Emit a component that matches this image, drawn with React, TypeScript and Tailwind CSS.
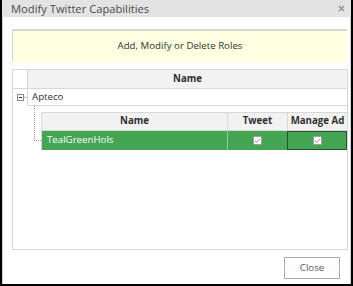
import React from "react";

function Check() {
  return (
    <svg width="9" height="9" viewBox="0 0 9 9">
      <rect x="0.5" y="0.5" width="8" height="8" fill="#ffffff" stroke="#9c9c9c" />
      <path d="M2 4.6L3.7 6.2L7 2.8" fill="none" stroke="#8a8a8a" strokeWidth="1" />
    </svg>
  );
}

export default function App() {
  return (
    <div className="w-[353px] h-[286px] bg-white border-x-2 border-b-2 border-black flex flex-col font-['Open_Sans',sans-serif] overflow-hidden">
      <div className="h-[17px] shrink-0 bg-[#e3e3e3] flex items-center justify-between pl-[9px] pr-[6px]">
        <span className="text-[11.2px] leading-none text-[#4a4a4a]">Modify Twitter Capabilities</span>
        <svg width="7" height="7" viewBox="0 0 7 7">
          <path d="M1 1L6 6M6 1L1 6" stroke="#8a8a8a" strokeWidth="1.1" />
        </svg>
      </div>
      <div className="flex-1 flex flex-col border-x border-[#d2d2d2]">
        <div className="ml-[9px] mt-[12px] w-[335px] h-[33px] bg-[#ffffe1] border-t-2 border-l border-[#d6d6d6] flex items-center justify-center text-[9.7px] text-[#333333]">
          Add, Modify or Delete Roles
        </div>
        <div className="ml-[9px] mt-[7px] w-[336px] h-[181px] border border-[#d8d8d8] flex flex-col text-[9.7px] text-[#333333]">
          <div className="flex h-[19px] border-b border-[#d8d8d8]">
            <div className="w-[14px]" />
            <div className="flex-1 bg-[#f2f2f2] border-l border-[#d8d8d8] flex items-center justify-center font-bold text-[#2f2f2f]">
              Name
            </div>
          </div>
          <div className="flex h-[17px]">
            <div className="w-[14px] flex items-center">
              <div className="ml-[4px] w-[7px] h-[7px] border border-[#8c8c8c] bg-white flex items-center justify-center">
                <div className="w-[3px] h-px bg-[#333333]" />
              </div>
              <div className="w-[3px] border-t border-dotted border-[#9a9a9a]" />
            </div>
            <div className="flex-1 border-l border-b border-[#d8d8d8] pl-[4px] flex items-center">
              Apteco
            </div>
          </div>
          <div className="flex">
            <div className="w-[28px] shrink-0">
              <div className="ml-[21px] w-[7px] h-[35px] border-l border-b border-dotted border-[#9a9a9a]" />
            </div>
            <div className="mt-[6px] flex-1 border-l border-t border-[#d8d8d8] flex flex-col">
              <div className="flex h-[18px] bg-[#f2f2f2] border-b border-[#d8d8d8] font-bold text-[#2f2f2f]">
                <div className="flex-1 flex items-center justify-center">Name</div>
                <div className="w-[60px] border-l border-[#d8d8d8] flex items-center justify-center">Tweet</div>
                <div className="w-[60px] border-l border-[#d8d8d8] flex items-center justify-center">Manage Ad</div>
              </div>
              <div className="flex h-[19px] bg-[#44a553] text-white">
                <div className="flex-1 flex items-center pl-[5px]">TealGreenHols</div>
                <div className="w-[60px] border-l border-[#8fcf98] flex items-center justify-center">
                  <Check />
                </div>
                <div className="w-[60px] border border-[#2a4f31] flex items-center justify-center">
                  <Check />
                </div>
              </div>
            </div>
          </div>
        </div>
        <div className="flex justify-end mt-[7px] pr-[10px]">
          <button className="w-[56px] h-[22px] border border-[#adadad] bg-[#fdfdfd] text-[9.7px] text-[#5a5a5a] flex items-center justify-center">
            Close
          </button>
        </div>
      </div>
    </div>
  );
}
